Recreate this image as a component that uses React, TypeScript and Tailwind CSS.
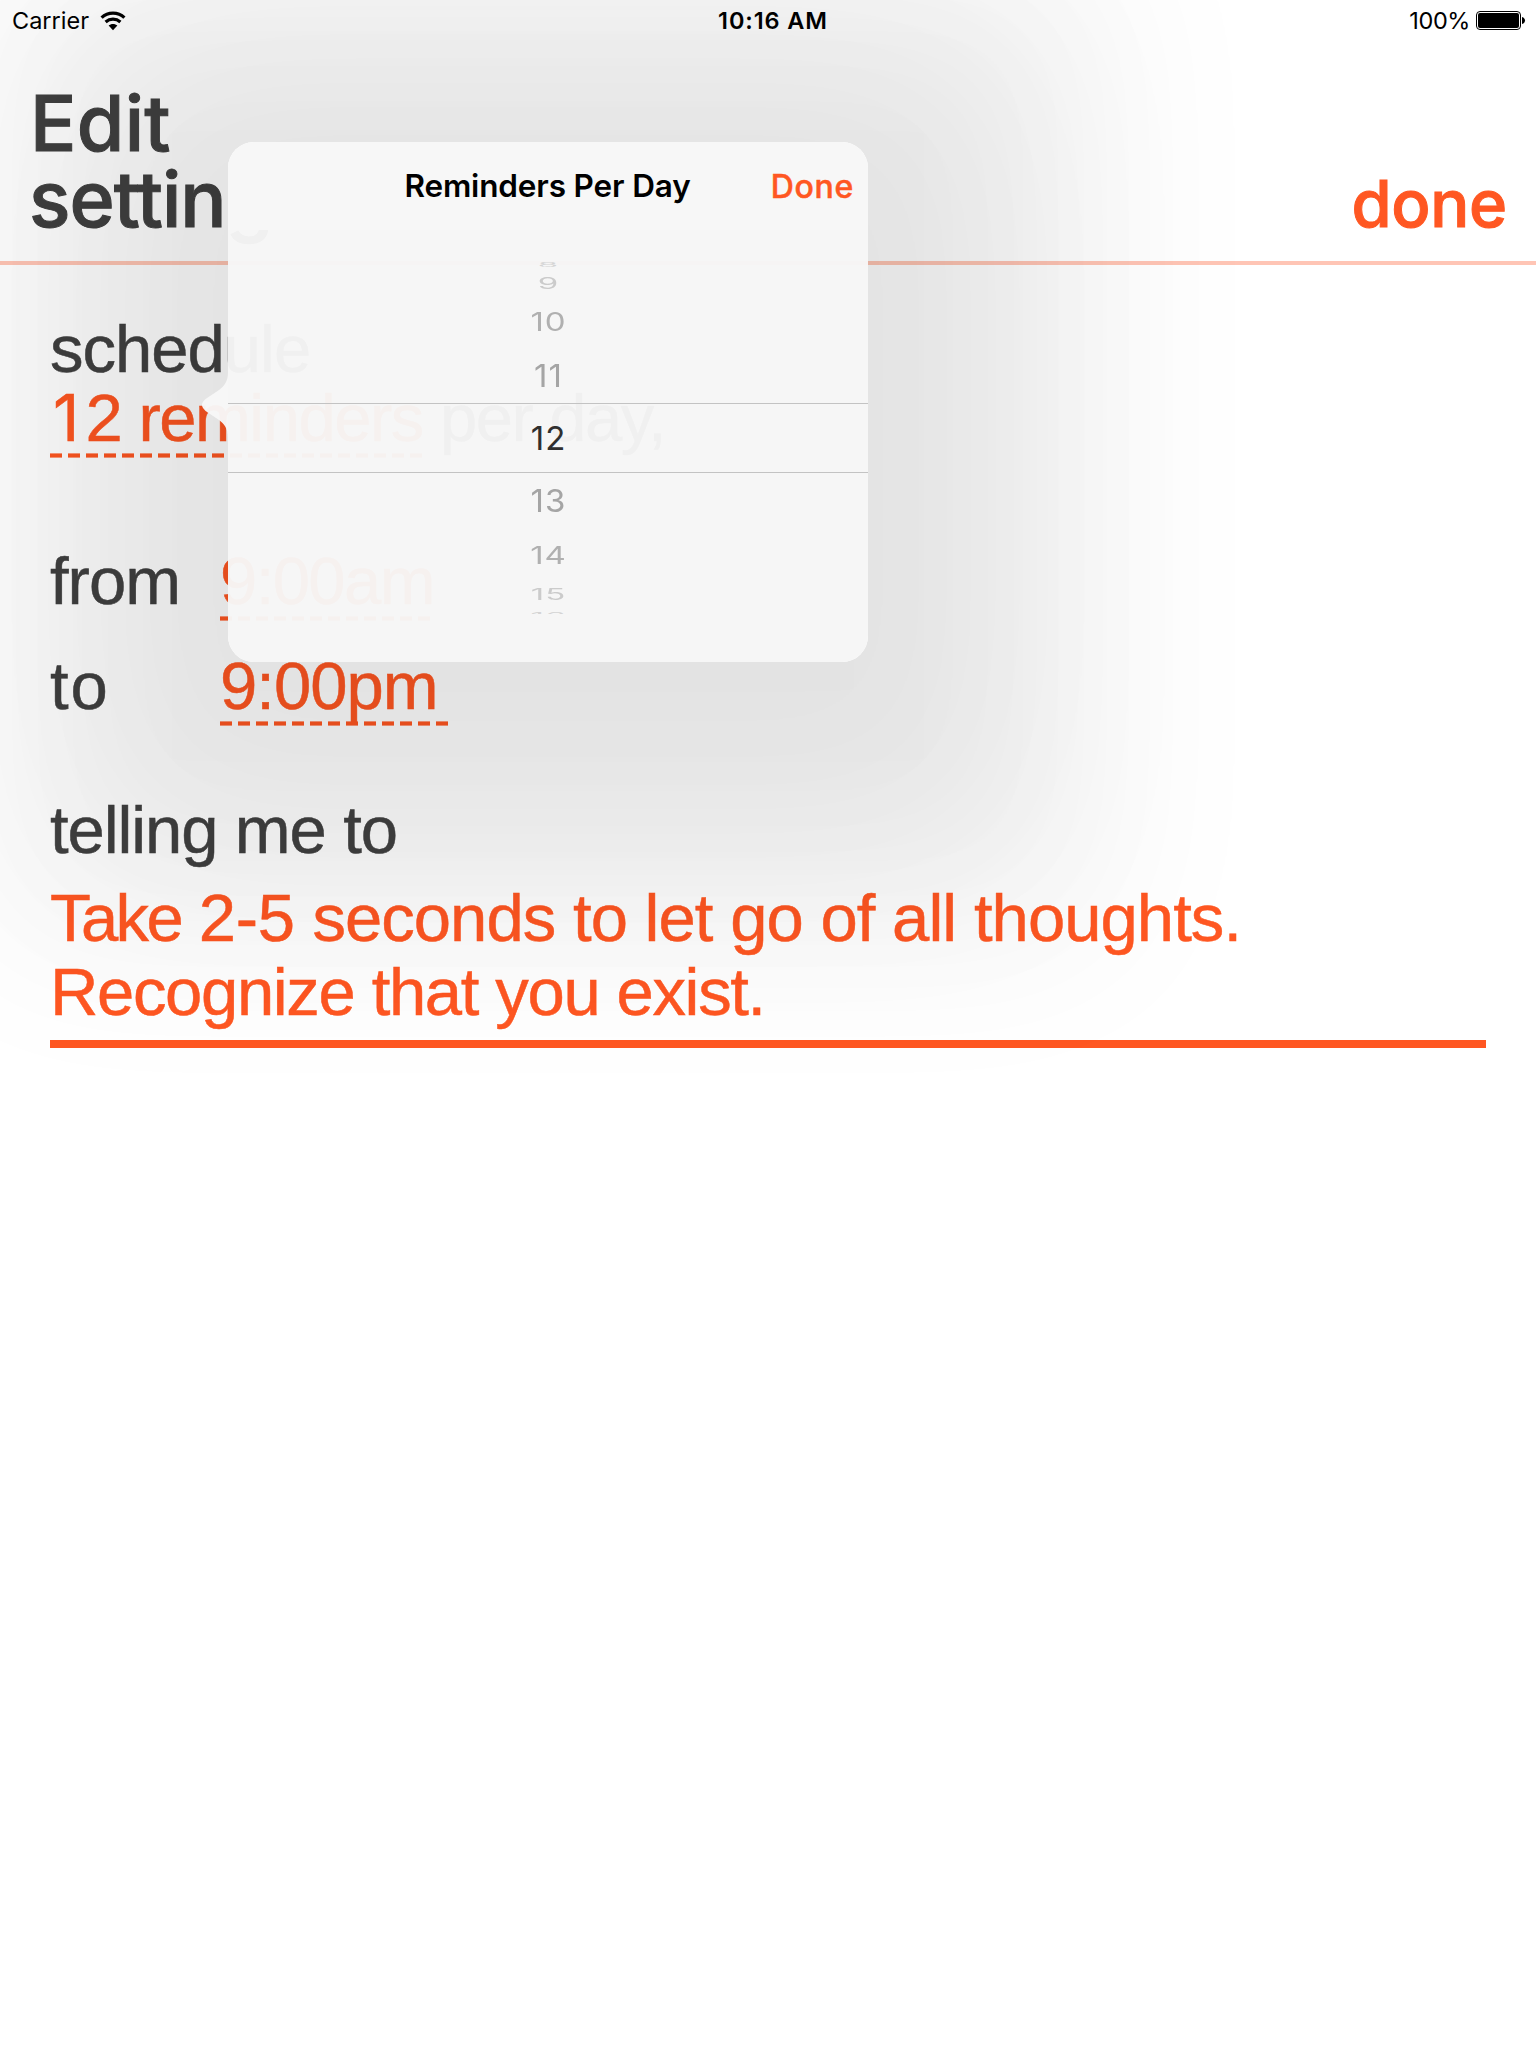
import React from 'react';

function StatusBar() {
  return (
    <div className="grid h-[41px] grid-cols-3 items-center pl-[12px] pr-[10px] text-[23.5px] leading-[41px] text-black font-['Inter',sans-serif]">
      <div className="flex items-center">
        <span>Carrier</span>
        <svg className="ml-[11px]" width="26" height="20" viewBox="0 0 26 20" fill="none">
          <path d="M1.6 6.7 C8 0.5 18 0.5 24.4 6.7" stroke="#000" strokeWidth="3.2" />
          <path d="M5.6 11 C10 7.2 16 7.2 20.4 11" stroke="#000" strokeWidth="3.2" />
          <path d="M8.6 14.6 C11 12.3 15 12.3 17.4 14.6 L13 19.2 Z" fill="#000" />
        </svg>
      </div>
      <span className="pl-[8px] text-center font-semibold tracking-[0.9px]">10:16 AM</span>
      <div className="flex items-center justify-end">
        <span className="tracking-[-0.4px]">100%</span>
        <svg className="ml-[6px]" width="50" height="20" viewBox="0 0 50 20">
          <rect x="0.5" y="0.5" width="44" height="18" rx="3.5" fill="#fff" stroke="#000" />
          <rect x="2" y="2" width="41" height="15" rx="2" fill="#000" />
          <path d="M46 6 C50 7 50 12 46 13 Z" fill="#000" />
        </svg>
      </div>
    </div>
  );
}

function Dashes({ className }: { className: string }) {
  return (
    <div
      className={
        'h-[5px] bg-[repeating-linear-gradient(90deg,#ff5722_0px,#ff5722_12px,transparent_12px,transparent_18px)] [mask-image:linear-gradient(#0009_1px,#000_1px,#000_4px,#0009_4px)] ' +
        className
      }
    />
  );
}

const picks = [
  { label: '8', row: 'h-[6px] items-end', text: 'scale-y-[0.2] translate-y-[17px] text-[#d4d4d4]' },
  { label: '9', row: 'h-[30px] items-center', text: 'scale-y-[0.47] text-[#cbcbcb]' },
  { label: '10', row: 'h-[47px] items-center', text: 'scale-y-[0.76] text-[#b0b0b0]' },
  { label: '11', row: 'h-[61px] items-center', text: 'scale-y-[0.94] text-[#a5a5a5]' },
  { label: '12', row: 'h-[65px] items-center', text: 'translate-y-[-1px] text-[#2f2f2f]' },
  { label: '13', row: 'h-[59px] items-center', text: 'scale-y-[0.94] text-[#a5a5a5]' },
  { label: '14', row: 'h-[50px] items-center', text: 'scale-y-[0.74] text-[#b0b0b0]' },
  { label: '15', row: 'h-[27px] items-center', text: 'scale-y-[0.46] text-[#cbcbcb]' },
  { label: '16', row: 'h-[7px] items-start', text: 'scale-y-[0.3] translate-y-[-11px] text-[#d4d4d4]' },
];

function Popover() {
  return (
    <div className="absolute left-[228px] top-[142px] h-[520px] w-[640px] rounded-[26px] shadow-[0_44px_170px_115px_rgba(0,0,0,0.036),0_44px_170px_190px_rgba(0,0,0,0.038),0_44px_170px_260px_rgba(0,0,0,0.038)] font-['Inter',sans-serif]">
      <svg className="absolute left-[-26px] top-[228px]" width="26" height="70" viewBox="0 0 26 70">
        <path
          d="M26 2 C26 12 22 16 17 20 L5 28 C-1.7 32.5 -1.7 37 5 42 L17 50 C22 54 26 58 26 68 Z"
          fill="#f7f7f7"
          fillOpacity="0.97"
        />
      </svg>
      <div className="h-full overflow-hidden rounded-[26px]">
        <div className="grid h-[88px] grid-cols-[1fr_auto_1fr] items-center bg-[#f7f7f7] pr-[14px]">
          <span />
          <span className="translate-x-[6.5px] text-[31.5px] font-semibold tracking-[-0.15px] text-black">Reminders Per Day</span>
          <span className="translate-y-[1px] text-right text-[32px] font-medium tracking-[0.7px] text-[#ff5722] [-webkit-text-stroke:0.5px_#ff5722]">Done</span>
        </div>
        <div className="relative h-[432px] bg-[#f6f6f6]/97 pt-[32px]">
          <div className="overflow-hidden">
            {picks.map((p) => (
              <div key={p.label} className={'flex translate-x-[0.5px] justify-center ' + p.row}>
                <span className={'text-[33px] leading-[40px] tracking-[1px] ' + p.text}>{p.label}</span>
              </div>
            ))}
          </div>
          <div className="absolute inset-x-0 top-[173px] h-[70px] border-y border-[#c3c3c3]" />
        </div>
      </div>
    </div>
  );
}

export default function App() {
  return (
    <div className="relative h-[2048px] w-[1536px] overflow-hidden bg-white text-[#414141]">
      <header className="flex h-[265px] flex-col border-b-[4px] border-[#ffc5b5] font-['Inter',sans-serif]">
        <div className="h-[41px]" />
        <div className="flex items-end justify-between pl-[29px] pr-[29px] pt-[44px] font-medium leading-[76px]">
          <h1 className="w-[320px] text-[77px] font-medium tracking-[-1px] [-webkit-text-stroke:1px_#414141]">
            <span className="block pl-[1px] tracking-[0.3px]">Edit</span>
            <span className="block">settings</span>
          </h1>
          <span className="translate-y-[5px] text-[65px] tracking-[-0.3px] text-[#ff5722] [-webkit-text-stroke:1px_#ff5722]">done</span>
        </div>
      </header>

      <main className="flex flex-col pl-[50px] pr-[50px] pt-[49px] text-[67px] leading-[69px] tracking-[-1px] font-['Liberation_Sans',sans-serif] [-webkit-text-stroke:0.5px_currentColor]">
        <p>schedule</p>
        <p className="whitespace-nowrap tracking-[-1.5px]">
          <span className="text-[#ff5722]">
            <span className="inline-block w-[35.5px] pl-[3px] text-[65px] leading-none font-['Inter',sans-serif]">1</span>2 reminders
          </span>{' '}
          per day,
        </p>
        <Dashes className="mt-[1px] w-[372px]" />
        <div className="mt-[88px] flex">
          <span className="w-[170px]">from</span>
          <span className="tracking-[-1.6px] text-[#ff5722]">9:00am</span>
        </div>
        <Dashes className="ml-[170px] mt-[1px] w-[210px]" />
        <div className="mt-[30px] flex">
          <span className="w-[170px] tracking-[2px]">to</span>
          <span className="tracking-[-1px] text-[#ff5722]">9:00pm</span>
        </div>
        <Dashes className="ml-[170px] mt-[1px] w-[228px]" />
        <p className="mt-[69px] tracking-[-1.1px]">telling me to</p>
        <div className="mt-[17px] h-[167px] border-b-[8px] border-[#ff5722] leading-[74px] text-[#ff5722]">
          <p className="tracking-[-0.95px]">
            <span className="tracking-[-2.6px]">Take</span> <span className="tracking-[-0.3px]">2-5</span> seconds to let go of all thoughts.
          </p>
          <p className="tracking-[-1.35px]">Recognize that you exist.</p>
        </div>
      </main>

      <Popover />
      <div className="absolute inset-x-0 top-0">
        <StatusBar />
      </div>
    </div>
  );
}
